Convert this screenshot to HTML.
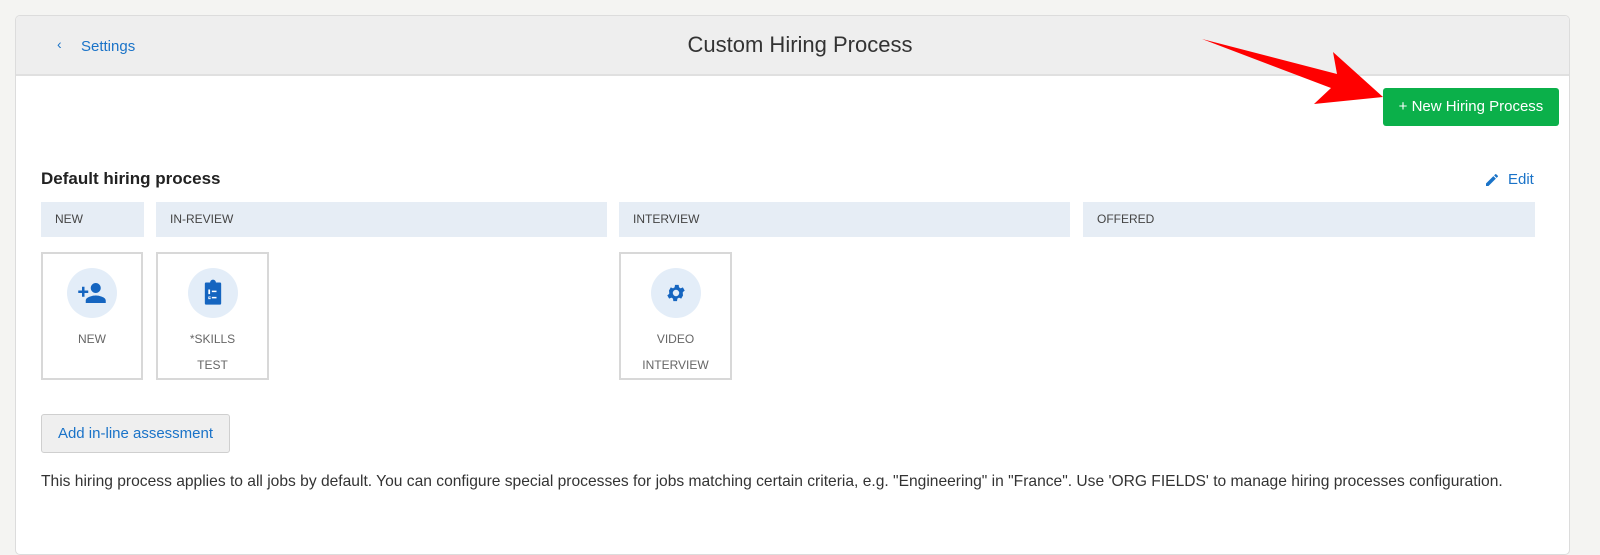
<!DOCTYPE html>
<html><head><meta charset="utf-8"><style>
*{margin:0;padding:0;box-sizing:border-box}
body{width:1600px;height:537px;background:#f4f4f2;font-family:"Liberation Sans",sans-serif;position:relative;overflow:hidden;color:#333}
.card{position:absolute;left:15px;top:15px;width:1555px;height:540px;background:#fff;border:1px solid #dcdcdc;border-radius:5px;overflow:hidden}
.hdr{position:absolute;left:0;top:0;width:100%;height:60px;background:#eeeeee;border-bottom:2px solid #e0e0e0}
.abs{position:absolute}
.blue{color:#1a73c8}
.band{position:absolute;top:202px;height:35px;background:#e6edf5;font-size:12px;color:#444;padding-left:14px;line-height:35px}
.st{position:absolute;top:252px;height:128px;border:2px solid #d8d8d8;text-align:center;font-size:12px;color:#666;line-height:26px}
.circ{width:50px;height:50px;border-radius:50%;background:#e3edf8;margin:14px auto 8px;display:flex;align-items:center;justify-content:center}
</style></head><body>
<div class="card"><div class="hdr"></div></div>
<div class="abs blue" style="left:57px;top:36px;font-size:14px">&#8249;</div>
<div class="abs blue" style="left:81px;top:38px;font-size:15px">Settings</div>
<div class="abs" style="left:0;width:1600px;text-align:center;top:32px;font-size:22px;color:#333">Custom Hiring Process</div>
<div class="abs" style="left:1383px;top:88px;width:176px;height:38px;background:#0bb04a;border-radius:3px;color:#fff;font-size:15px;text-align:center;line-height:38px">+ New Hiring Process</div>
<div class="abs" style="left:41px;top:169px;font-size:17px;font-weight:bold;color:#222">Default hiring process</div>
<svg class="abs" style="left:1484px;top:172px" width="16" height="16" viewBox="0 0 24 24"><path fill="#1a73c8" d="M3 17.25V21h3.75L17.8 9.94l-3.75-3.75L3 17.25zM20.7 7.04a1 1 0 000-1.41l-2.34-2.34a1 1 0 00-1.41 0l-1.830 1.83 3.75 3.75 1.83-1.83z"/></svg>
<div class="abs blue" style="left:1508px;top:171px;font-size:15px">Edit</div>
<div class="band" style="left:41px;width:103px">NEW</div>
<div class="band" style="left:156px;width:451px">IN-REVIEW</div>
<div class="band" style="left:619px;width:451px">INTERVIEW</div>
<div class="band" style="left:1083px;width:452px">OFFERED</div>
<div class="st" style="left:41px;width:102px"><div class="circ"><svg width="30" height="30" viewBox="0 0 24 24"><path fill="#1565c0" d="M15 12c2.2 0 4-1.8 4-4s-1.8-4-4-4-4 1.8-4 4 1.8 4 4 4zm-9-2V7H4v3H1v2h3v3h2v-3h3v-2H6zm9 4c-2.7 0-8 1.3-8 4v2h16v-2c0-2.7-5.3-4-8-4z"/></svg></div>NEW</div>
<div class="st" style="left:156px;width:113px"><div class="circ"><svg width="28" height="28" viewBox="0 0 24 24"><path fill="#1565c0" d="M6 3h3.5a2.5 2.5 0 015 0H18a1 1 0 011 1v17a1 1 0 01-1 1H6a1 1 0 01-1-1V4a1 1 0 011-1z"/><path fill="#fff" d="M8 9h1.5v4H8zm3 1h4v1.3h-4zm-3 5h2v.8H8.6v.6H10v.8H8zm3 .3h4v1.3h-4z"/></svg></div>*SKILLS<br>TEST</div>
<div class="st" style="left:619px;width:113px"><div class="circ"><svg width="22" height="22" viewBox="0 0 24 24"><path fill="#1565c0" d="M19.4 13a7.5 7.5 0 000-2l2.1-1.6-2-3.5-2.5 1a7.5 7.5 0 00-1.7-1l-.4-2.7h-4l-.4 2.7a7.5 7.5 0 00-1.7 1l-2.5-1-2 3.5L4.6 11a7.5 7.5 0 000 2l-2.1 1.6 2 3.5 2.5-1a7.5 7.5 0 001.7 1l.4 2.7h4l.4-2.7a7.5 7.5 0 001.7-1l2.5 1 2-3.5L19.4 13zM12 15.5a3.5 3.5 0 110-7 3.5 3.5 0 010 7z"/></svg></div>VIDEO<br>INTERVIEW</div>
<div class="abs blue" style="left:41px;top:414px;width:189px;height:39px;background:#efefef;border:1px solid #cfcfcf;border-radius:3px;font-size:15px;line-height:37px;text-align:center">Add in-line assessment</div>
<div class="abs" style="left:41px;top:473px;font-size:15.6px;color:#333;white-space:nowrap">This hiring process applies to all jobs by default. You can configure special processes for jobs matching certain criteria, e.g. "Engineering" in "France". Use 'ORG FIELDS' to manage hiring processes configuration.</div>
<svg class="abs" style="left:0;top:0" width="1600" height="537"><polygon fill="#ff0000" points="1202,39 1337,74 1333,52 1383,97 1314,104 1331,88"/></svg>
</body></html>
